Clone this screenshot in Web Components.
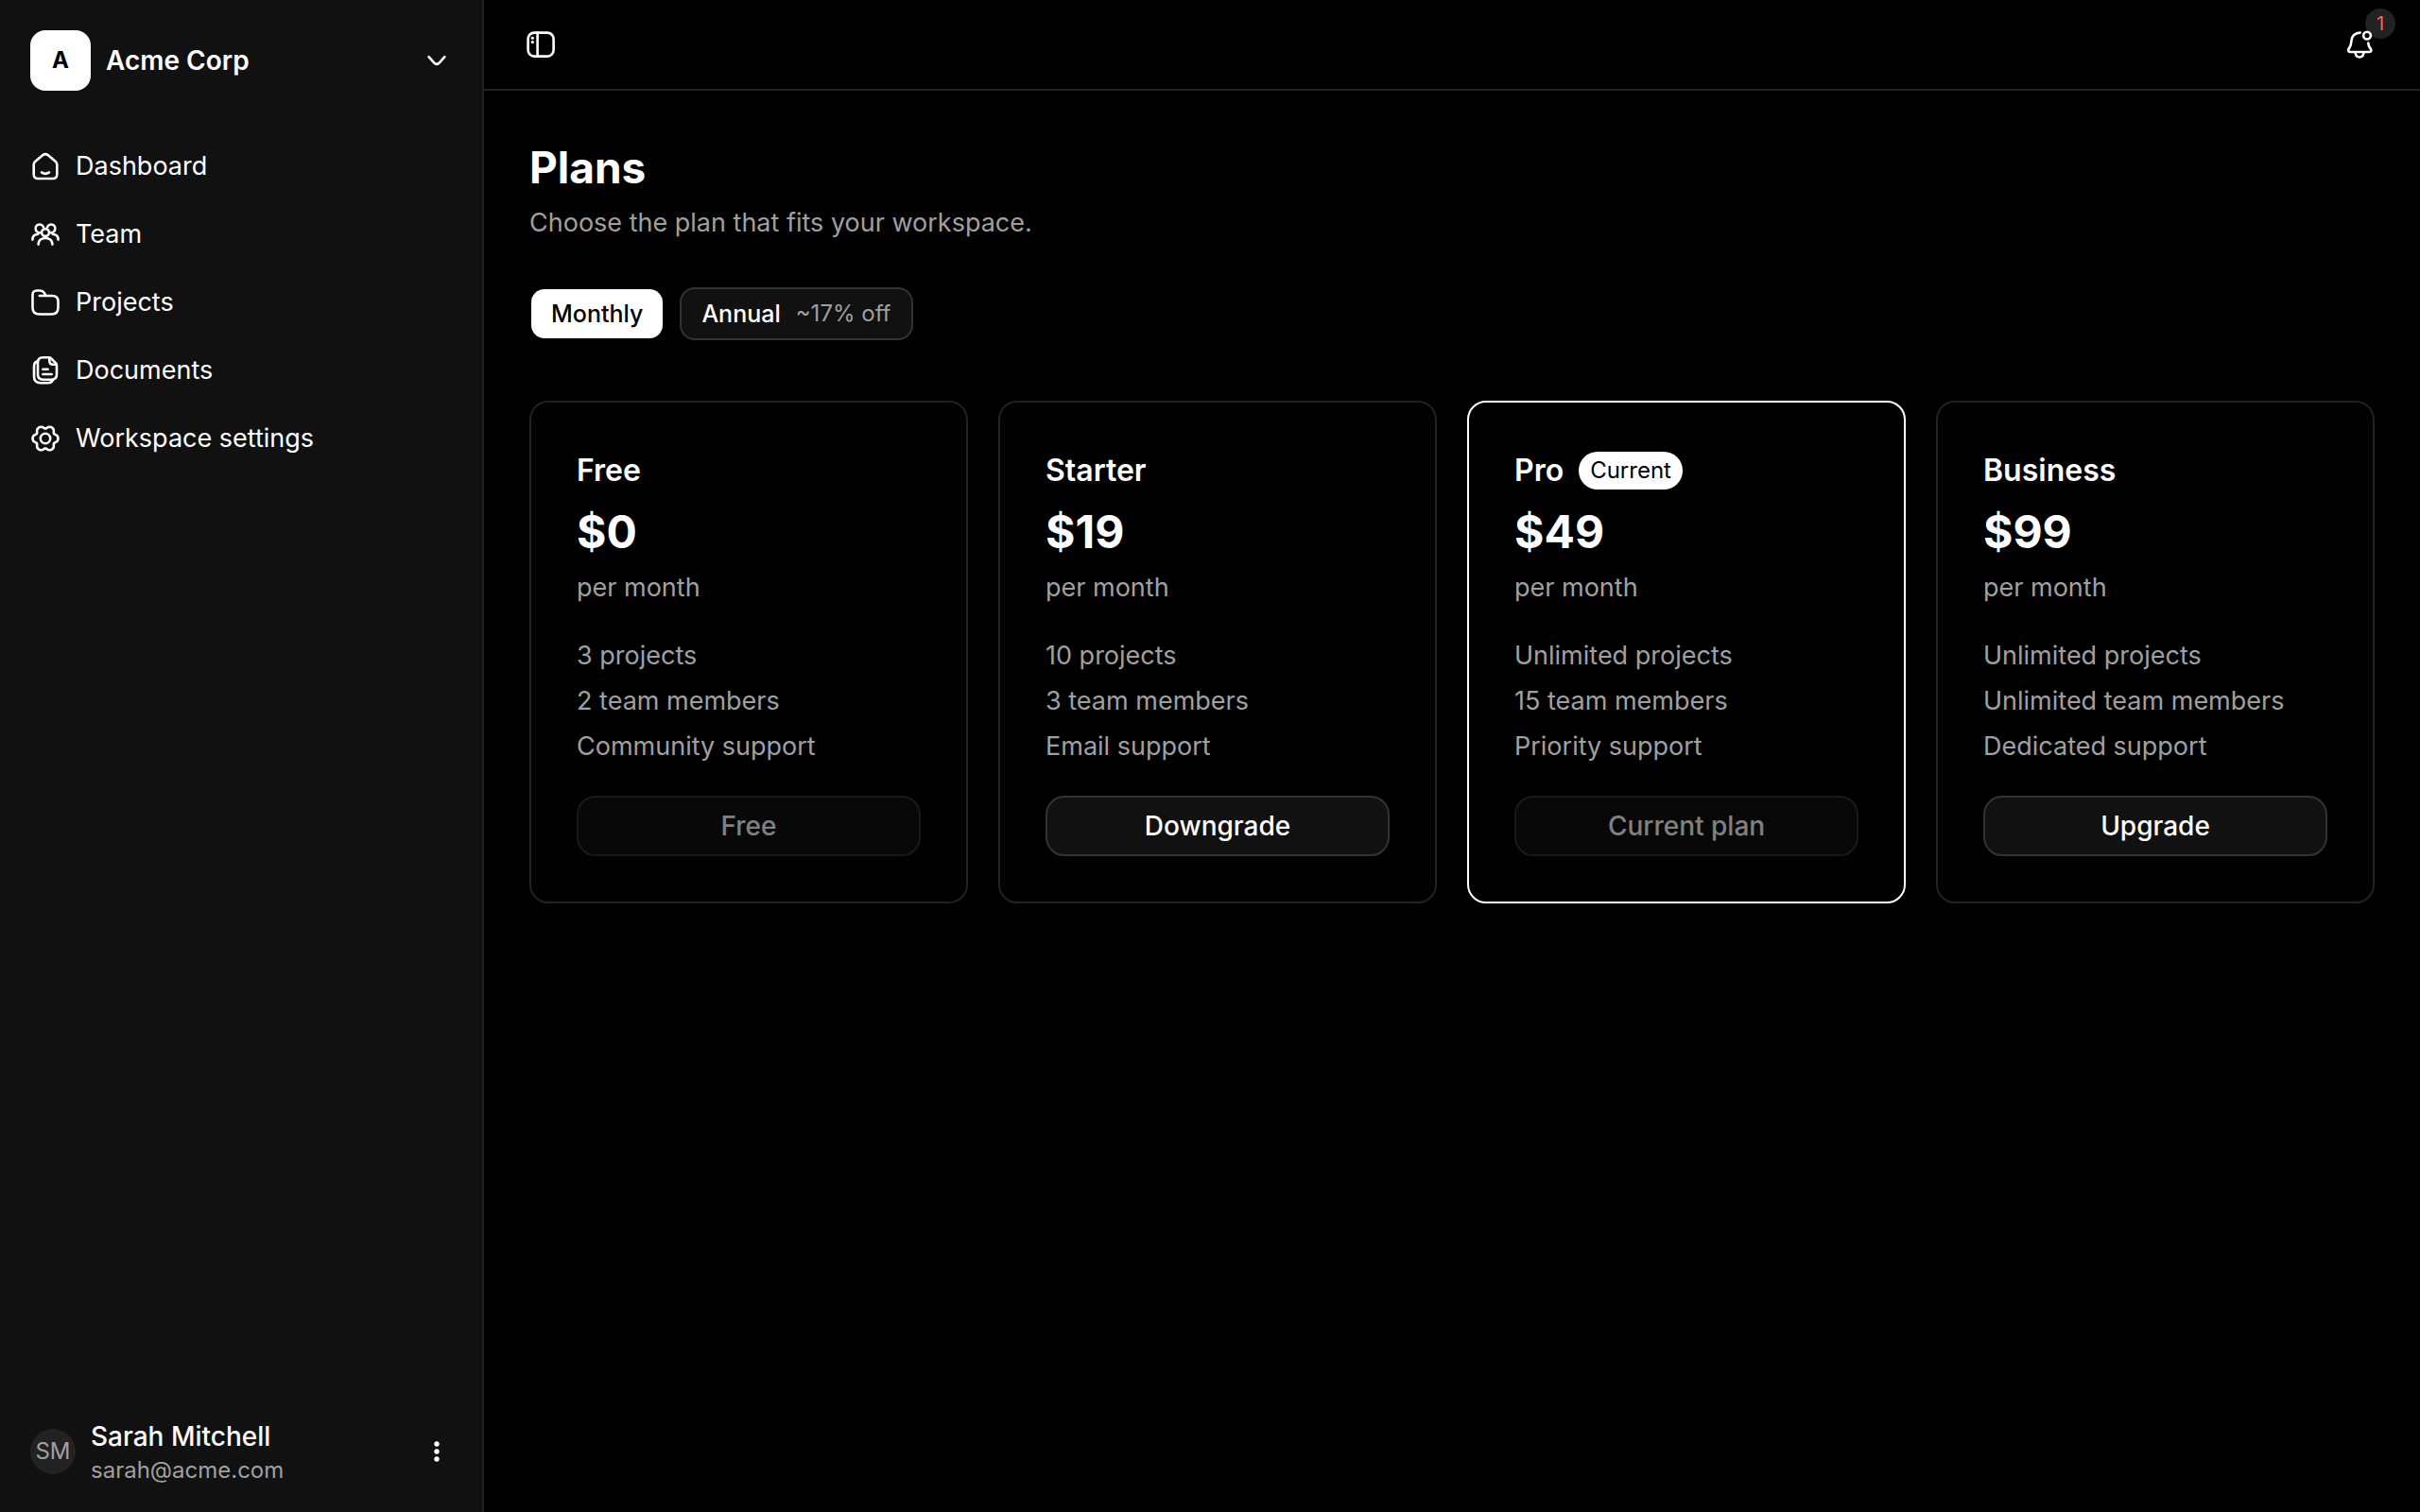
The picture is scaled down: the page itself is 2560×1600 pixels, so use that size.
<!DOCTYPE html>
<html lang="en">
<head>
<meta charset="utf-8">
<title>Plans</title>
<style>
  html, body { margin: 0; min-height: 100%; background: #000; }
  body {
    --panel: #111; --line: #222; --edge: #333; --text: #fff; --muted: #a0a0a0;
    font-family: Inter, "Liberation Sans", sans-serif; font-size: 27px; line-height: 40px;
    color: var(--text);
  }
</style>
</head>
<body>
<app-shell>
  <side-bar slot="sidebar">
    <nav-item icon="home">Dashboard</nav-item>
    <nav-item icon="team">Team</nav-item>
    <nav-item icon="folder">Projects</nav-item>
    <nav-item icon="docs">Documents</nav-item>
    <nav-item icon="gear">Workspace settings</nav-item>
    <user-row slot="user" initials="SM" name="Sarah Mitchell" email="sarah@acme.com"></user-row>
  </side-bar>
  <top-bar slot="header" count="1"></top-bar>
  <plans-page>
    <plan-card name="Free" price="$0" action="Free" locked>
      <li>3 projects</li><li>2 team members</li><li>Community support</li>
    </plan-card>
    <plan-card name="Starter" price="$19" action="Downgrade">
      <li>10 projects</li><li>3 team members</li><li>Email support</li>
    </plan-card>
    <plan-card name="Pro" price="$49" action="Current plan" locked current>
      <li>Unlimited projects</li><li>15 team members</li><li>Priority support</li>
    </plan-card>
    <plan-card name="Business" price="$99" action="Upgrade">
      <li>Unlimited projects</li><li>Unlimited team members</li><li>Dedicated support</li>
    </plan-card>
  </plans-page>
</app-shell>
<script>
  const BASE = `
    *, *::before, *::after { box-sizing: border-box; }
    :host { display: block; box-sizing: border-box; }
    button { font: inherit; color: inherit; background: none; border: 0; padding: 0; margin: 0; cursor: pointer; }
    h1, h2, p, ul { margin: 0; padding: 0; }
  `;
  const define = (tag, render) => customElements.define(tag, class extends HTMLElement {
    connectedCallback() {
      if (this.shadowRoot) return;
      const { css, html } = render(this);
      this.attachShadow({ mode: 'open' }).innerHTML = `<style>${BASE}${css}</style>${html}`;
    }
  });

  // Six-lobed outline of the settings gear, on a 32-unit grid.
  const gear = Array.from({ length: 96 }, (_, i) => {
    const t = i * Math.PI / 48;
    const r = 12.2 + 1.5 * Math.cos(6 * t) - 0.25 * Math.cos(12 * t);
    return (16 + r * Math.cos(t)).toFixed(2) + ' ' + (16 + r * Math.sin(t)).toFixed(2);
  }).join('L');

  const ICONS = {
    home: '<path d="M3.7 14.2Q3.7 12 5.4 10.7L13.4 4.1Q16 2 18.6 4.1L26.6 10.7Q28.3 12 28.3 14.2V24.5Q28.3 29 23.8 29H8.2Q3.7 29 3.7 24.5Z"/><path d="M12 22.4Q16 25.2 20 22.4"/>',
    team: '<path d="M13.9 8.2A4.3 4.3 0 1 0 11 14M18.1 8.2A4.3 4.3 0 1 1 21 14"/><circle cx="16" cy="14" r="3.9"/><path d="M8.6 26.6C8.6 22.6 11.7 20 16 20S23.4 22.6 23.4 26.6M2.4 21.6C2.4 18.4 4.6 16 8.2 15.7M29.6 21.6C29.6 18.4 27.4 16 23.8 15.7"/>',
    folder: '<path d="M9.8 9H23.2Q29.5 9 29.5 15V21.5Q29.5 28.5 22.5 28.5H9.5Q2.5 28.5 2.5 21.5V8Q2.5 3.5 7 3.5H10.5Q13.2 3.5 14.6 5.6L16.6 9"/>',
    docs: '<path d="M19.8 2.3H13.4Q8 2.3 8 7.6V20.3Q8 25.7 13.4 25.7H22.6Q28 25.7 28 20.3V10.4Q28 9.2 27.1 8.3L21.9 3.1Q21 2.3 19.8 2.3Z"/><path d="M20.3 2.8V5.8Q20.3 9.7 24.2 9.7H27.6"/><path d="M8 6.4Q4 7 4 11.5V22.6Q4 29.2 10.8 29.2H18.5Q23 29.2 24 25.9M13.4 14.7H18.6M13.4 20H22.6"/>',
    gear: `<path d="M${gear}Z"/><circle cx="16" cy="16" r="5.2"/>`,
    panel: '<rect x="2.6" y="3.6" width="27" height="25" rx="6.5"/><path d="M12.6 3.6V28.6"/><path stroke-width="3" d="M7.1 9.3H7.5M7.1 13.4H7.5"/>',
    bell: '<path d="M16.7 3.6C11.4 3.6 7.6 7.2 7.4 12.2C7.2 15.8 7.2 17 5.4 19.4C3.8 21.5 3.6 24 6.2 24H26.4C29 24 28.6 21.5 27 19.4C25.8 17.7 25.4 16.6 25.3 14.6"/><path d="M11.6 24.5C11.8 27.8 13.3 29.5 16 29.5S20.2 27.8 20.4 24.5"/><circle cx="24" cy="6.6" r="3.9"/>',
    chevron: '<path d="M7.6 12.2L13.6 18.8Q16 21 18.4 18.8L24.4 12.2"/>',
    more: '<g fill="currentColor" stroke="none"><circle cx="16" cy="8" r="2.7"/><circle cx="16" cy="16" r="2.7"/><circle cx="16" cy="24" r="2.7"/></g>'
  };

  define('line-icon', el => ({
    css: `:host { width: 32px; height: 32px; flex: none; } svg { display: block; width: 100%; height: 100%; }`,
    html: `<svg viewBox="0 0 32 32" fill="none" stroke="currentColor" stroke-width="2.6" stroke-linecap="round" stroke-linejoin="round" aria-hidden="true">${ICONS[el.getAttribute('name')]}</svg>`
  }));

  define('app-shell', () => ({
    css: `:host { display: grid; grid-template-columns: 512px 1fr; min-height: 100vh; }
      .content { min-width: 0; }`,
    html: `<slot name="sidebar"></slot><div class="content"><slot name="header"></slot><slot></slot></div>`
  }));

  define('side-bar', () => ({
    css: `:host { display: flex; flex-direction: column; background: var(--panel); border-right: 2px solid var(--line); }
      .org { display: flex; align-items: center; gap: 16px; width: 100%; padding: 32px; text-align: left; font-size: 28px; font-weight: 600; }
      .logo { display: grid; place-items: center; width: 64px; height: 64px; border-radius: 16px; background: #fff; color: #000; font-size: 24px; font-weight: 700; }
      .name { flex: 1; }
      nav { flex: 1; padding-top: 12px; }`,
    html: `<button class="org"><span class="logo">A</span><span class="name">Acme Corp</span><line-icon name="chevron"></line-icon></button>
      <nav><slot></slot></nav><slot name="user"></slot>`
  }));

  define('nav-item', el => ({
    css: `a { display: flex; align-items: center; gap: 16px; height: 72px; padding: 0 32px; color: inherit; text-decoration: none; }`,
    html: `<a href="#"><line-icon name="${el.getAttribute('icon')}"></line-icon><span><slot></slot></span></a>`
  }));

  define('user-row', el => ({
    css: `:host { padding: 0 32px 28px; }
      button { display: flex; align-items: center; gap: 16px; width: 100%; text-align: left; }
      .avatar { display: grid; place-items: center; width: 48px; height: 48px; border-radius: 50%; background: var(--line); color: var(--muted); font-size: 24px; }
      .who { flex: 1; display: grid; }
      .name { font-size: 28px; font-weight: 500; }
      .mail { font-size: 24px; line-height: 32px; color: var(--muted); }`,
    html: `<button><span class="avatar">${el.getAttribute('initials')}</span>
      <span class="who"><span class="name">${el.getAttribute('name')}</span><span class="mail">${el.getAttribute('email')}</span></span>
      <line-icon name="more"></line-icon></button>`
  }));

  define('top-bar', el => ({
    css: `:host { display: flex; align-items: center; justify-content: space-between; height: 96px; padding: 0 48px 0 44px; border-bottom: 2px solid var(--line); }
      .bell { position: relative; isolation: isolate; }
      .count { position: absolute; z-index: -1; top: -22px; right: -22px; width: 32px; height: 32px; border-radius: 50%; background: var(--line); color: #ff5c5c; font-size: 20px; line-height: 32px; text-align: center; }`,
    html: `<button aria-label="Toggle sidebar"><line-icon name="panel"></line-icon></button>
      <button class="bell" aria-label="Notifications"><line-icon name="bell"></line-icon><span class="count">${el.getAttribute('count')}</span></button>`
  }));

  define('plans-page', () => ({
    css: `:host { padding: 48px; }
      h1 { font-size: 46px; line-height: 66px; font-weight: 700; }
      .sub { margin-top: 6px; color: var(--muted); }
      .terms { display: flex; gap: 16px; margin: 48px 0 64px; }
      .terms button { display: flex; align-items: center; gap: 16px; height: 56px; padding: 0 21px; border: 2px solid var(--edge); border-radius: 16px; background: var(--panel); font-size: 25px; font-weight: 500; }
      .terms button[aria-pressed=true] { background: #fff; background-clip: padding-box; border-color: transparent; color: #000; }
      .off { color: var(--muted); font-size: 24px; font-weight: 400; }
      .cards { display: grid; grid-template-columns: repeat(4, minmax(0, 1fr)); gap: 32px; }`,
    html: `<h1>Plans</h1><p class="sub">Choose the plan that fits your workspace.</p>
      <div class="terms"><button aria-pressed="true">Monthly</button><button aria-pressed="false">Annual<span class="off">~17% off</span></button></div>
      <div class="cards"><slot></slot></div>`
  }));

  define('plan-card', el => ({
    css: `:host { display: flex; flex-direction: column; padding: 48px; border: 2px solid var(--line); border-radius: 20px; color: var(--muted); }
      :host([current]) { border-color: #fff; }
      .head { display: flex; align-items: center; gap: 16px; height: 48px; color: var(--text); }
      h2 { font-size: 32px; font-weight: 600; }
      .tag { height: 40px; padding: 0 12px; border-radius: 20px; background: #fff; color: #000; font-size: 24px; }
      .price { margin: 8px 0 6px; font-size: 48px; line-height: 66px; font-weight: 700; color: var(--text); }
      ul { display: grid; gap: 8px; margin: 32px 0; list-style: none; }
      button { height: 64px; border: 2px solid var(--edge); border-radius: 20px; background: var(--panel); color: var(--text); font-size: 28px; font-weight: 500; }
      button:disabled { opacity: .5; }`,
    html: `<div class="head"><h2>${el.getAttribute('name')}</h2>${el.hasAttribute('current') ? '<span class="tag">Current</span>' : ''}</div>
      <p class="price">${el.getAttribute('price')}</p><p>per month</p>
      <ul><slot></slot></ul>
      <button ${el.hasAttribute('locked') ? 'disabled' : ''}>${el.getAttribute('action')}</button>`
  }));
</script>
</body>
</html>
